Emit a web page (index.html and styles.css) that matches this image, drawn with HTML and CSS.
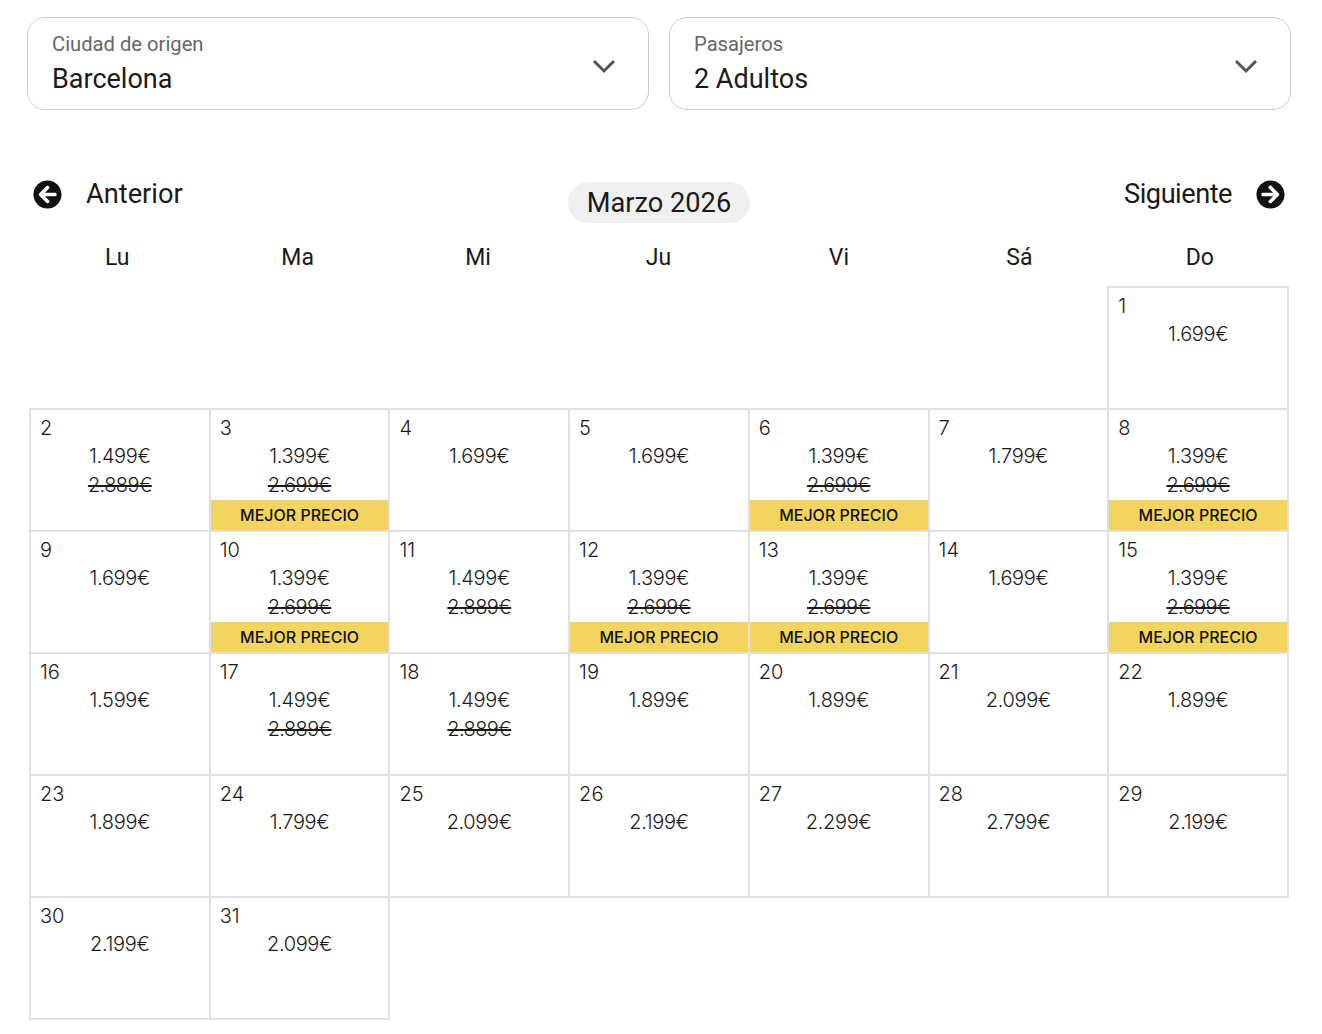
FILE: index.html
```html
<!DOCTYPE html>
<html lang="es">
<head>
<meta charset="utf-8">
<title>Calendario de precios</title>
<link rel="stylesheet" href="styles.css">
</head>
<body>
<main class="page">
  <section class="selects">
    <div class="select">
      <div class="select-text"><span class="select-label">Ciudad de origen</span><span class="select-value">Barcelona</span></div>
      <svg class="chevron" viewBox="0 0 24 15"><path d="M2 2l10 10L22 2"/></svg>
    </div>
    <div class="select">
      <div class="select-text"><span class="select-label">Pasajeros</span><span class="select-value">2 Adultos</span></div>
      <svg class="chevron" viewBox="0 0 24 15"><path d="M2 2l10 10L22 2"/></svg>
    </div>
  </section>
  <nav class="month-nav">
    <div class="nav-link nav-prev">
      <svg class="nav-icon" viewBox="0 0 512 512"><path d="M256 504C119 504 8 393 8 256S119 8 256 8s248 111 248 248-111 248-248 248zm28.9-143.6L209.4 288H392c13.3 0 24-10.7 24-24v-16c0-13.3-10.7-24-24-24H209.4l75.5-72.4c9.7-9.3 9.9-24.8.4-34.3l-11-10.9c-9.4-9.4-24.6-9.4-33.9 0L107.7 239c-9.4 9.4-9.4 24.6 0 33.9l132.7 132.7c9.4 9.4 24.6 9.4 33.9 0l11-10.9c9.5-9.5 9.3-25-.4-34.3z"/></svg>
      <span>Anterior</span>
    </div>
    <div class="month-pill">Marzo 2026</div>
    <div class="nav-link nav-next">
      <span class="next-label">Siguiente</span>
      <svg class="nav-icon" viewBox="0 0 512 512"><path d="M256 8c137 0 248 111 248 248S393 504 256 504 8 393 8 256 119 8 256 8zm-28.9 143.6l75.5 72.4H120c-13.3 0-24 10.7-24 24v16c0 13.3 10.7 24 24 24h182.6l-75.5 72.4c-9.7 9.3-9.9 24.8-.4 34.3l11 10.9c9.4 9.4 24.6 9.4 33.9 0L404.3 273c9.4-9.4 9.4-24.6 0-33.9L271.6 106.3c-9.4-9.4-24.6-9.4-33.9 0l-11 10.9c-9.5 9.6-9.3 25.1.4 34.4z"/></svg>
    </div>
  </nav>
  <div class="weekdays"><span>Lu</span><span>Ma</span><span>Mi</span><span>Ju</span><span>Vi</span><span>Sá</span><span>Do</span></div>
  <table class="calendar">
    <tbody>
      <tr>
        <td class="empty"></td><td class="empty"></td><td class="empty"></td><td class="empty"></td><td class="empty"></td><td class="empty"></td>
        <td><div class="day"><span class="num">1</span><span class="price">1.699€</span></div></td>
      </tr>
      <tr>
        <td><div class="day"><span class="num">2</span><span class="price">1.499€</span><s class="old">2.889€</s></div></td>
        <td><div class="day"><span class="num">3</span><span class="price">1.399€</span><s class="old">2.699€</s><span class="badge">MEJOR PRECIO</span></div></td>
        <td><div class="day"><span class="num">4</span><span class="price">1.699€</span></div></td>
        <td><div class="day"><span class="num">5</span><span class="price">1.699€</span></div></td>
        <td><div class="day"><span class="num">6</span><span class="price">1.399€</span><s class="old">2.699€</s><span class="badge">MEJOR PRECIO</span></div></td>
        <td><div class="day"><span class="num">7</span><span class="price">1.799€</span></div></td>
        <td><div class="day"><span class="num">8</span><span class="price">1.399€</span><s class="old">2.699€</s><span class="badge">MEJOR PRECIO</span></div></td>
      </tr>
      <tr>
        <td><div class="day"><span class="num">9</span><span class="price">1.699€</span></div></td>
        <td><div class="day"><span class="num">10</span><span class="price">1.399€</span><s class="old">2.699€</s><span class="badge">MEJOR PRECIO</span></div></td>
        <td><div class="day"><span class="num">11</span><span class="price">1.499€</span><s class="old">2.889€</s></div></td>
        <td><div class="day"><span class="num">12</span><span class="price">1.399€</span><s class="old">2.699€</s><span class="badge">MEJOR PRECIO</span></div></td>
        <td><div class="day"><span class="num">13</span><span class="price">1.399€</span><s class="old">2.699€</s><span class="badge">MEJOR PRECIO</span></div></td>
        <td><div class="day"><span class="num">14</span><span class="price">1.699€</span></div></td>
        <td><div class="day"><span class="num">15</span><span class="price">1.399€</span><s class="old">2.699€</s><span class="badge">MEJOR PRECIO</span></div></td>
      </tr>
      <tr>
        <td><div class="day"><span class="num">16</span><span class="price">1.599€</span></div></td>
        <td><div class="day"><span class="num">17</span><span class="price">1.499€</span><s class="old">2.889€</s></div></td>
        <td><div class="day"><span class="num">18</span><span class="price">1.499€</span><s class="old">2.889€</s></div></td>
        <td><div class="day"><span class="num">19</span><span class="price">1.899€</span></div></td>
        <td><div class="day"><span class="num">20</span><span class="price">1.899€</span></div></td>
        <td><div class="day"><span class="num">21</span><span class="price">2.099€</span></div></td>
        <td><div class="day"><span class="num">22</span><span class="price">1.899€</span></div></td>
      </tr>
      <tr>
        <td><div class="day"><span class="num">23</span><span class="price">1.899€</span></div></td>
        <td><div class="day"><span class="num">24</span><span class="price">1.799€</span></div></td>
        <td><div class="day"><span class="num">25</span><span class="price">2.099€</span></div></td>
        <td><div class="day"><span class="num">26</span><span class="price">2.199€</span></div></td>
        <td><div class="day"><span class="num">27</span><span class="price">2.299€</span></div></td>
        <td><div class="day"><span class="num">28</span><span class="price">2.799€</span></div></td>
        <td><div class="day"><span class="num">29</span><span class="price">2.199€</span></div></td>
      </tr>
      <tr>
        <td><div class="day"><span class="num">30</span><span class="price">2.199€</span></div></td>
        <td><div class="day"><span class="num">31</span><span class="price">2.099€</span></div></td>
        <td class="empty"></td><td class="empty"></td><td class="empty"></td><td class="empty"></td><td class="empty"></td>
      </tr>
    </tbody>
  </table>
</main>
</body>
</html>
```
FILE: styles.css
```css
* { box-sizing: border-box; }
html, body { margin: 0; background: #fff; }
body { font-family: "Inter", "Liberation Sans", sans-serif; color: #1a1a1a; }
.page { width: 1264px; margin-left: 27px; padding-top: 17px; }
.selects { display: flex; gap: 20px; }
.select {
  flex: 1 1 0; height: 93px; border: 1px solid #ccc; border-radius: 18px;
  display: flex; align-items: center; justify-content: space-between;
  padding: 0 32px 0 24px;
}
.select-text { display: flex; flex-direction: column; }
.select-label { font-family: "Roboto", sans-serif; font-size: 20.2px; line-height: 28px; color: #666; margin-bottom: 4px; margin-top: -2px; }
.select-value { font-family: "Roboto", sans-serif; font-size: 27px; line-height: 34px; color: #1a1a1a; }
.chevron { width: 24px; height: 15px; fill: none; stroke: #555; stroke-width: 3; margin-top: 6px; }
.month-nav { display: flex; justify-content: space-between; align-items: flex-start; margin-top: 65px; padding: 0 6px; }
.nav-link { display: flex; align-items: center; gap: 24px; font-family: "Roboto", sans-serif; font-size: 27.2px; line-height: 34px; width: 190px; margin-top: 2px; color: #1a1a1a; }
.next-label { letter-spacing: -0.5px; }
.nav-next { justify-content: flex-end; }
.nav-icon { width: 29px; height: 29px; fill: #111; flex: none; }
.month-pill { font-family: "Roboto", sans-serif; font-size: 27.2px; line-height: 43px; height: 41px; padding: 0 19px; background: #f0f0f0; border-radius: 21px; margin-top: 7px; color: #1a1a1a; }
.weekdays { display: grid; grid-template-columns: repeat(7, 1fr); width: 1263px; height: 53px; margin-top: 10px; padding-bottom: 5px; align-items: center; text-align: center; font-family: "Roboto", sans-serif; font-size: 23px; }
.calendar { table-layout: fixed; width: 1260px; margin: 0 0 0 2px; border-collapse: collapse; }
.calendar td { border: 2px solid #e0e0e0; padding: 0; height: 122px; vertical-align: top; }
.calendar td.empty { border: 0; }
.day { height: 120px; display: flex; flex-direction: column; text-align: center; font-size: 20px; font-weight: 300; letter-spacing: -0.35px; color: #1a1a1a; padding-top: 4px; }
.num { line-height: 28px; text-align: left; padding-left: 9px; letter-spacing: 0; }
.price { line-height: 29px; }
.old { line-height: 29px; letter-spacing: -0.6px; }
.badge { margin-top: auto; height: 30px; line-height: 30px; background: #f3d45f; font-size: 16px; font-weight: 500; letter-spacing: 0; color: #111; }
```
